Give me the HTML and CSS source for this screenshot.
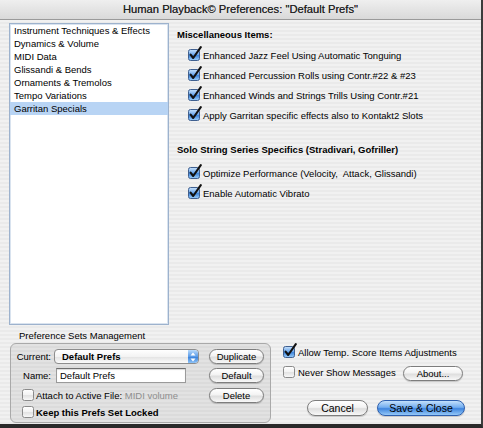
FILE: index.html
```html
<!DOCTYPE html>
<html>
<head>
<meta charset="utf-8">
<link rel="stylesheet" href="styles.css">
</head>
<body>
<div class="window">
  <div class="titlebar">Human Playback© Preferences: "Default Prefs"</div>
  <div class="top">
    <ul class="list">
      <li>Instrument Techniques &amp; Effects</li>
      <li>Dynamics &amp; Volume</li>
      <li>MIDI Data</li>
      <li>Glissandi &amp; Bends</li>
      <li>Ornaments &amp; Tremolos</li>
      <li>Tempo Variations</li>
      <li class="selected">Garritan Specials</li>
    </ul>
    <div class="panel">
      <div class="heading">Miscellaneous Items:</div>
      <div class="rows first">
        <label class="check-row"><svg class="cb" viewBox="0 0 14 15"><use href="#checked"/></svg>Enhanced Jazz Feel Using Automatic Tonguing</label>
        <label class="check-row"><svg class="cb" viewBox="0 0 14 15"><use href="#checked"/></svg>Enhanced Percussion Rolls using Contr.#22 &amp; #23</label>
        <label class="check-row"><svg class="cb" viewBox="0 0 14 15"><use href="#checked"/></svg>Enhanced Winds and Strings Trills Using Contr.#21</label>
        <label class="check-row"><svg class="cb" viewBox="0 0 14 15"><use href="#checked"/></svg>Apply Garritan specific effects also to Kontakt2 Slots</label>
      </div>
      <div class="heading second">Solo String Series Specifics (Stradivari, Gofriller)</div>
      <div class="rows second-rows">
        <label class="check-row"><svg class="cb" viewBox="0 0 14 15"><use href="#checked"/></svg>Optimize Performance (Velocity,&nbsp; Attack, Glissandi)</label>
        <label class="check-row"><svg class="cb" viewBox="0 0 14 15"><use href="#checked"/></svg>Enable Automatic Vibrato</label>
      </div>
    </div>
  </div>
  <div class="bottom">
    <div class="mgmt">
      <div class="legend">Preference Sets Management</div>
      <div class="group">
        <div class="cell field-row">
          <span class="lbl">Current:</span>
          <div class="popup"><span>Default Prefs</span><span class="popup-arrows"><svg viewBox="0 0 8 12" width="8" height="12"><path d="M4 1.5 L6.5 4.5 H1.5 Z M4 10.5 L6.5 7.5 H1.5 Z" fill="#fff"/></svg></span></div>
        </div>
        <div class="cell btn-cell"><button class="btn">Duplicate</button></div>
        <div class="cell field-row">
          <span class="lbl">Name:</span>
          <div class="textfield">Default Prefs</div>
        </div>
        <div class="cell btn-cell"><button class="btn">Default</button></div>
        <div class="cell small-check">
          <svg class="cb" viewBox="0 0 14 15"><use href="#unchecked"/></svg><span>Attach to Active File: <span class="dim">MIDI volume</span></span>
        </div>
        <div class="cell btn-cell"><button class="btn">Delete</button></div>
        <div class="cell small-check bold">
          <svg class="cb" viewBox="0 0 14 15"><use href="#unchecked"/></svg><span>Keep this Prefs Set Locked</span>
        </div>
        <div class="cell"></div>
      </div>
    </div>
    <div class="right">
      <label class="check-row allow"><svg class="cb" viewBox="0 0 14 15"><use href="#checked"/></svg>Allow Temp. Score Items Adjustments</label>
      <div class="never">
        <label class="check-row"><svg class="cb" viewBox="0 0 14 15"><use href="#unchecked"/></svg>Never Show Messages</label>
        <button class="btn about">About...</button>
      </div>
      <div class="actions">
        <button class="btn cancel">Cancel</button>
        <button class="btn primary">Save &amp; Close</button>
      </div>
    </div>
  </div>
</div>
<svg width="0" height="0" class="defs">
  <defs>
    <linearGradient id="blueg" x1="0" y1="0" x2="0" y2="1">
      <stop offset="0" stop-color="#c9e2fb"/>
      <stop offset="0.45" stop-color="#6fa9ec"/>
      <stop offset="0.55" stop-color="#3f86dc"/>
      <stop offset="1" stop-color="#9fd0fa"/>
    </linearGradient>
    <linearGradient id="whiteg" x1="0" y1="0" x2="0" y2="1">
      <stop offset="0" stop-color="#ffffff"/>
      <stop offset="0.5" stop-color="#f2f2f2"/>
      <stop offset="0.55" stop-color="#e2e2e2"/>
      <stop offset="1" stop-color="#fafafa"/>
    </linearGradient>
    <g id="checked">
      <rect x="0.5" y="3.5" width="11" height="11" rx="2" fill="url(#blueg)" stroke="#3f5f8f"/>
      <path d="M2.6 8.6 L5.2 12 L12.8 1.2" fill="none" stroke="#111" stroke-width="2.1" stroke-linecap="round" stroke-linejoin="round"/>
    </g>
    <g id="unchecked">
      <rect x="0.5" y="3.5" width="11" height="11" rx="2" fill="url(#whiteg)" stroke="#8a8a8a"/>
    </g>
  </defs>
</svg>
</body>
</html>
```
FILE: styles.css
```css
html, body {
  margin: 0;
  padding: 0;
  background: #ededed;
}
.defs {
  position: absolute;
  width: 0;
  height: 0;
}
.window {
  width: 483px;
  height: 428px;
  box-sizing: border-box;
  border-right: 2px solid #3c3c3c;
  border-bottom: 4px solid #2a2a2a;
  overflow: hidden;
  font-family: "Liberation Sans", Arial, sans-serif;
  font-size: 9.5px;
  color: #000;
  background: repeating-linear-gradient(to bottom, #f1f1f1 0, #f1f1f1 2px, #eaeaea 2px, #eaeaea 4px);
}
.titlebar {
  height: 19px;
  border-bottom: 1px solid #9a9a9a;
  background: linear-gradient(to bottom, #efefef, #d9d9d9);
  text-align: center;
  font-size: 11.2px;
  line-height: 19px;
  color: #222;
  text-shadow: 0 0 0.25px #555;
}
.top {
  display: flex;
  padding: 3px 0 0 9px;
}
.list {
  list-style: none;
  margin: 0;
  padding: 0;
  width: 160px;
  height: 302px;
  box-sizing: border-box;
  border: 1px solid #9db2cd;
  box-shadow: inset 0 0 0 1px #d9e3ef;
  background: #fff;
}
.list li {
  height: 13px;
  line-height: 13px;
  padding-left: 4px;
  white-space: nowrap;
}
.list li.selected {
  background: #b8d4f4;
}
.panel {
  margin-left: 8px;
  padding-top: 5px;
}
.heading {
  font-weight: bold;
  line-height: 14px;
  height: 14px;
}
.heading.second {
  margin-top: 18px;
}
.rows.first {
  margin-top: 3px;
}
.rows.second-rows {
  margin-top: 6px;
}
.check-row {
  display: flex;
  align-items: center;
  height: 20px;
  white-space: nowrap;
}
.rows .check-row {
  padding-left: 11px;
}
.cb {
  width: 14px;
  height: 15px;
  flex: none;
  margin-right: 1px;
  margin-top: -3px;
}
.bottom {
  display: grid;
  grid-template-columns: 261px 182px;
  column-gap: 12px;
  padding-left: 10px;
}
.legend {
  margin-top: 5px;
  height: 12px;
  line-height: 12px;
  padding-left: 9px;
}
.group {
  margin-top: 1px;
  height: 80px;
  box-sizing: border-box;
  border: 1px solid #a9a9a9;
  border-radius: 6px;
  background: repeating-linear-gradient(to bottom, #e2e2e2 0, #e2e2e2 2px, #dbdbdb 2px, #dbdbdb 4px);
  padding: 4px 6px 3px 5px;
  display: grid;
  grid-template-columns: 1fr 55px;
  grid-template-rows: 17px 20px 20px 14px;
  column-gap: 4px;
}
.cell {
  display: flex;
  align-items: center;
  min-width: 0;
}
.field-row .lbl {
  width: 35px;
  text-align: right;
  flex: none;
}
.popup {
  margin-left: 3px;
  width: 145px;
  height: 15px;
  box-sizing: border-box;
  border: 1px solid #8d8d8d;
  border-radius: 4px;
  background: linear-gradient(to bottom, #ffffff, #f3f3f3 50%, #e4e4e4 55%, #fbfbfb);
  display: flex;
  align-items: center;
  justify-content: space-between;
  font-weight: bold;
  padding-left: 7px;
  overflow: hidden;
}
.popup-arrows {
  width: 10px;
  height: 13px;
  display: flex;
  align-items: center;
  justify-content: center;
  border-radius: 0 3px 3px 0;
  background: linear-gradient(to bottom, #b9dafb, #5a9be8 50%, #3b82db 55%, #8ec3f7);
}
.textfield {
  margin-left: 5px;
  width: 130px;
  height: 15px;
  box-sizing: border-box;
  border: 1px solid #9a9a9a;
  border-top-color: #6e6e6e;
  background: #fff;
  box-shadow: inset 0 1px 1px rgba(0,0,0,0.15);
  line-height: 13px;
  padding-left: 3px;
}
.small-check {
  padding-left: 6px;
  white-space: nowrap;
}
.small-check .cb {
  margin-right: 0;
}
.small-check.bold {
  font-weight: bold;
}
.dim {
  color: #8e8e8e;
}
.btn-cell {
  justify-content: center;
}
.btn {
  font-family: "Liberation Sans", Arial, sans-serif;
  font-size: 9.5px;
  color: #000;
  height: 15px;
  width: 55px;
  padding: 0;
  box-sizing: border-box;
  border: 1px solid #7d7d7d;
  border-radius: 8px;
  background: linear-gradient(to bottom, #ffffff, #f3f3f3 45%, #dedede 55%, #f8f8f8);
  box-shadow: 0 1px 1px rgba(0,0,0,0.18);
  line-height: 13px;
}
.right {
  padding-top: 19px;
}
.right .allow {
  height: 16px;
}
.never {
  margin-top: 4px;
  height: 16px;
  display: flex;
  align-items: center;
  justify-content: space-between;
}
.never .check-row {
  height: 16px;
}
.about {
  width: 60px;
  margin-right: 2px;
  margin-top: 2px;
}
.actions {
  margin-top: 20px;
  display: flex;
  justify-content: flex-end;
  gap: 9px;
}
.cancel {
  width: 61px;
  height: 16px;
  font-size: 10.5px;
}
.primary {
  width: 88px;
  height: 16px;
  font-size: 10.5px;
  border-color: #2d5fae;
  background: linear-gradient(to bottom, #c3e0fb, #74aef0 45%, #3f85de 55%, #94c8f8);
}
```
